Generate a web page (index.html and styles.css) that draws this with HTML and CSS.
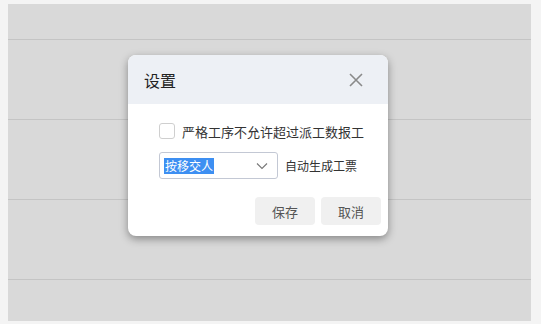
FILE: index.html
```html
<!DOCTYPE html>
<html lang="zh-CN">
<head>
    <meta charset="UTF-8">
    <title>设置</title>
    <link rel="stylesheet" href="styles.css">
</head>
<body>
    <div class="page">
        <div class="table-row first"></div>
        <div class="table-row"></div>
        <div class="table-row"></div>
        <div class="table-row"></div>
        <div class="table-row last"></div>
    </div>

    <div class="dialog">
        <div class="dialog-header">
            <span class="dialog-title">设置</span>
            <button class="dialog-close" aria-label="关闭">
                <svg width="14" height="14" viewBox="0 0 14 14">
                    <path d="M1 1 L13 13 M13 1 L1 13" stroke="#8a8a8a" stroke-width="1.6" fill="none"/>
                </svg>
            </button>
        </div>
        <div class="dialog-body">
            <label class="check-row">
                <span class="checkbox"></span>
                <span class="check-label">严格工序不允许超过派工数报工</span>
            </label>
            <div class="select-row">
                <div class="select">
                    <span class="select-value">按移交人</span>
                    <svg class="select-arrow" width="12" height="8" viewBox="0 0 12 8">
                        <path d="M1 1.5 L6 6.5 L11 1.5" stroke="#777" stroke-width="1.1" fill="none"/>
                    </svg>
                </div>
                <span class="select-note">自动生成工票</span>
            </div>
        </div>
        <div class="dialog-footer">
            <button class="btn">保存</button>
            <button class="btn">取消</button>
        </div>
    </div>
</body>
</html>
```

FILE: styles.css
```css
* {
    box-sizing: border-box;
    margin: 0;
    padding: 0;
}

body {
    background-color: #f4f4f4;
    font-family: 'Noto Sans CJK SC', 'Noto Sans', sans-serif;
    color: #333;
    width: 541px;
    height: 324px;
    overflow: hidden;
    padding: 4px 10px 3px 8px;
}

.page {
    background-color: #d9d9d9;
    height: 317px;
    display: flex;
    flex-direction: column;
}

.table-row {
    height: 80px;
    border-bottom: 1px solid #c4c4c4;
    flex-shrink: 0;
}

.table-row.first {
    height: 36px;
}

.table-row.last {
    flex: 1;
    border-bottom: none;
}

/* модальное окно поверх таблицы */
.dialog {
    position: absolute;
    left: 128px;
    top: 55px;
    width: 260px;
    height: 181px;
    background: #fff;
    border-radius: 8px;
    box-shadow: 0 3px 9px rgba(0, 0, 0, 0.38);
    overflow: hidden;
}

.dialog-header {
    height: 49px;
    background-color: #edf0f5;
    display: flex;
    align-items: center;
    justify-content: space-between;
    padding: 0 25px 0 16px;
}

.dialog-title {
    font-size: 16px;
    color: #222;
    line-height: 1;
}

.dialog-close {
    border: none;
    background: none;
    width: 14px;
    height: 14px;
    display: flex;
}

.dialog-body {
    padding: 19px 0 0 31px;
}

.check-row {
    display: flex;
    align-items: center;
    height: 16px;
}

.checkbox {
    width: 16px;
    height: 16px;
    border: 1px solid #cfcfcf;
    border-radius: 3px;
    background: #fff;
    margin-right: 7px;
}

.check-label {
    font-size: 13px;
    color: #333;
    line-height: 1;
}

.select-row {
    display: flex;
    align-items: center;
    margin-top: 13px;
}

.select {
    width: 119px;
    height: 27px;
    border: 1px solid #c3c8d4;
    border-radius: 3px;
    display: flex;
    align-items: center;
    justify-content: space-between;
    padding: 0 9px 0 4px;
}

.select-value {
    font-size: 12px;
    line-height: 16px;
    background-color: #3d8ff2;
    color: #fff;
    padding: 0 1px;
}

.select-note {
    font-size: 12px;
    color: #333;
    margin-left: 7px;
}

.dialog-footer {
    display: flex;
    justify-content: flex-end;
    gap: 6px;
    padding: 18px 7px 0 0;
}

.btn {
    width: 60px;
    height: 28px;
    border: none;
    border-radius: 4px;
    background-color: #f0f0f0;
    font-family: inherit;
    font-size: 13px;
    color: #555;
}
```
